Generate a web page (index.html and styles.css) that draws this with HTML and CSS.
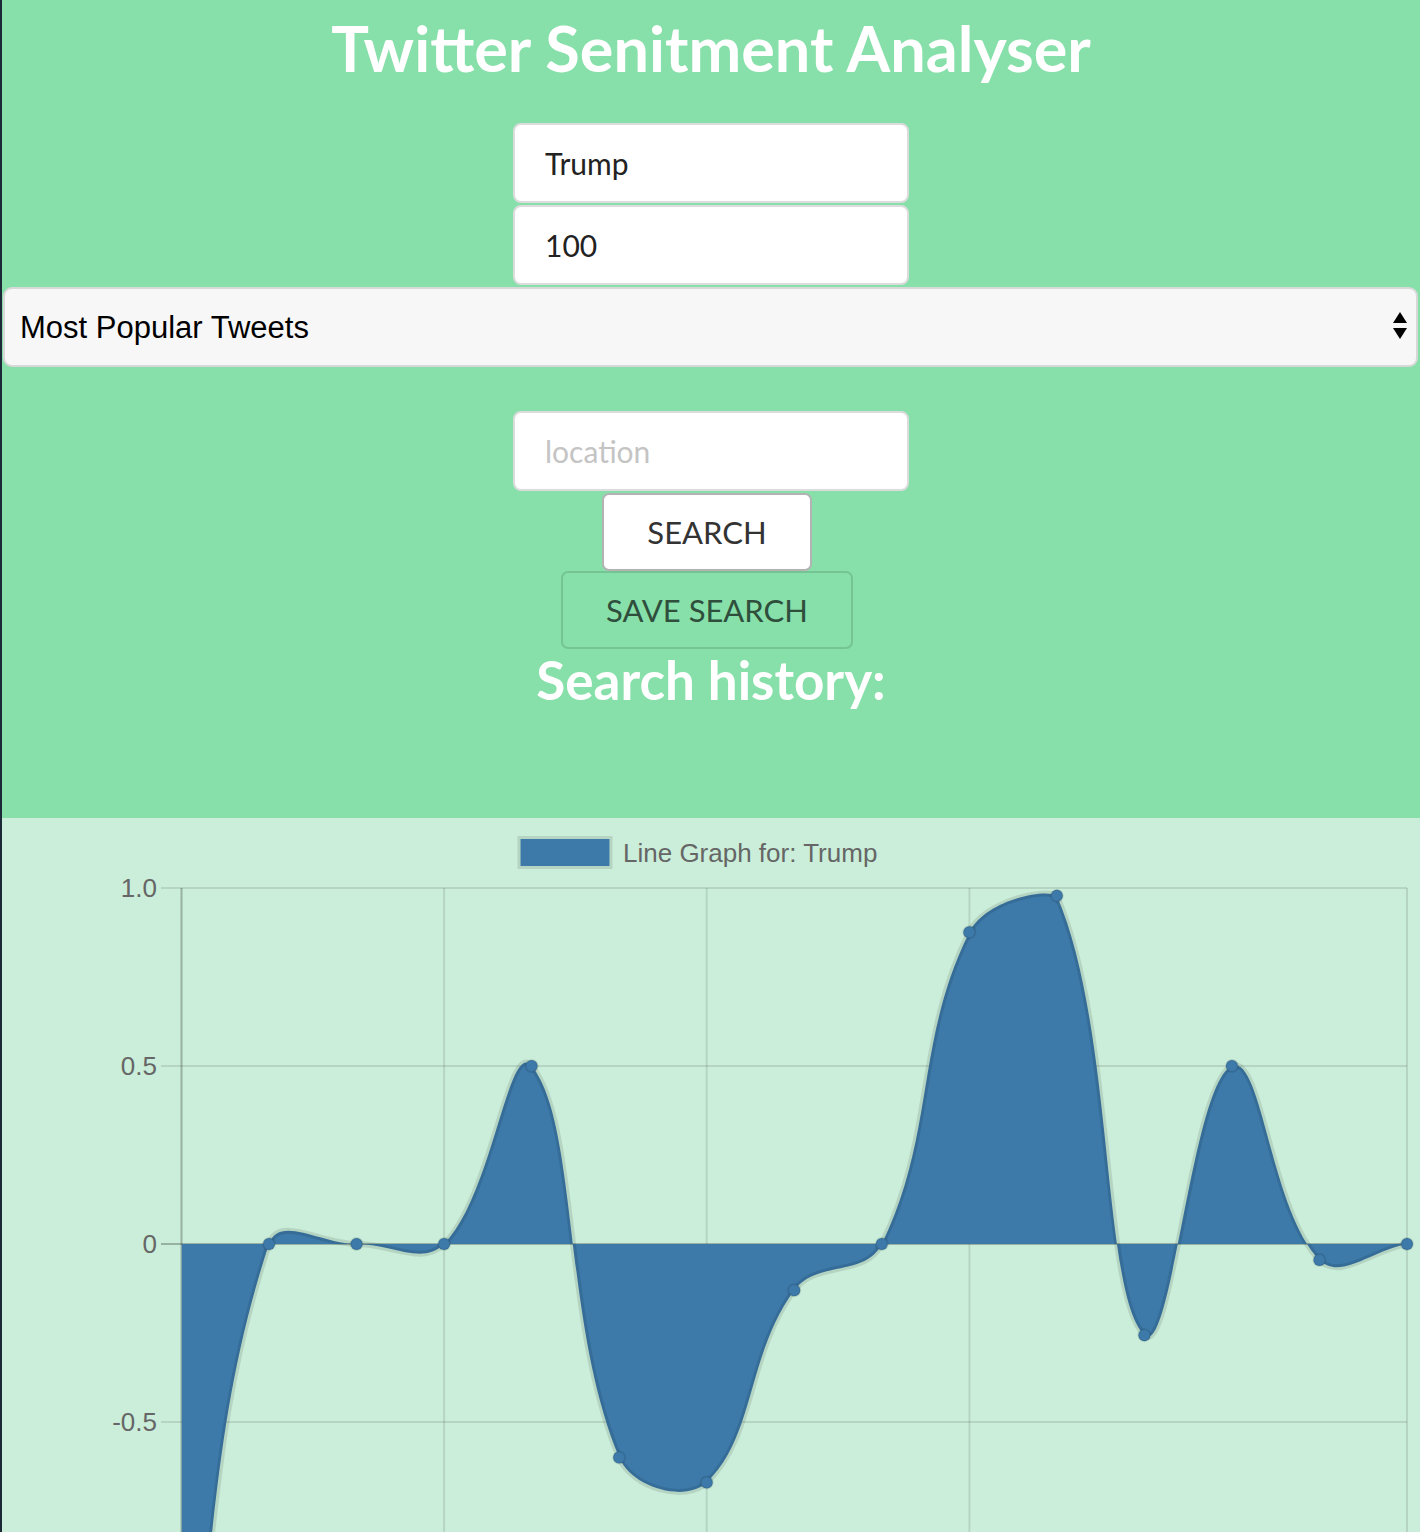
FILE: index.html
```html
<!DOCTYPE html>
<html lang="en">
<head>
<meta charset="utf-8">
<title>Twitter Sentiment Analyser</title>
<link rel="stylesheet" href="styles.css">
</head>
<body>
<div class="page">
  <header class="hero">
    <h1 class="title">Twitter Senitment Analyser</h1>
    <form class="search-form">
      <input class="field" type="text" value="Trump">
      <input class="field" type="text" value="100">
      <div class="select-wrap">
        <select class="select">
          <option>Most Popular Tweets</option>
          <option>Most Recent Tweets</option>
        </select>
        <svg class="select-arrows" width="14" height="27" viewBox="0 0 14 27" aria-hidden="true">
          <polygon points="7,0 14,11 0,11" fill="#000"/>
          <polygon points="0,16 14,16 7,27" fill="#000"/>
        </svg>
      </div>
      <input class="field field-location" type="text" placeholder="location">
      <div class="actions">
        <button type="button" class="btn btn-search">SEARCH</button>
        <button type="button" class="btn btn-save">SAVE SEARCH</button>
      </div>
    </form>
    <h2 class="history-title">Search history:</h2>
  </header>
  <section class="chart-panel">
    <svg class="chart" width="1418" height="714" viewBox="2 818 1418 714">
      <defs>
        <clipPath id="plot-clip">
          <rect x="181.5" y="880" width="1225.5" height="700"/>
        </clipPath>
      </defs>
      <g class="legend">
        <rect x="520.5" y="839" width="89" height="27" fill="#3d7aaa"/>
        <rect x="519" y="837.5" width="92" height="30" fill="none" stroke="rgba(0,0,0,0.1)" stroke-width="3"/>
        <text class="legend-label" x="623" y="855">Line Graph for: Trump</text>
      </g>
      <g class="grid" stroke="rgba(0,0,0,0.1)" stroke-width="2">
        <line x1="161" y1="888" x2="1407" y2="888"/>
        <line x1="161" y1="1066" x2="1407" y2="1066"/>
        <line x1="161" y1="1422" x2="1407" y2="1422"/>
        <line x1="444.1" y1="888" x2="444.1" y2="1540"/>
        <line x1="706.7" y1="888" x2="706.7" y2="1540"/>
        <line x1="969.4" y1="888" x2="969.4" y2="1540"/>
        <line x1="1407" y1="888" x2="1407" y2="1540"/>
      </g>
      <g class="zero-lines" stroke="rgba(0,0,0,0.25)" stroke-width="2">
        <line x1="161" y1="1244" x2="1407" y2="1244"/>
        <line x1="181.5" y1="888" x2="181.5" y2="1540"/>
      </g>
      <g class="ticks">
        <text x="157" y="890">1.0</text>
        <text x="157" y="1068">0.5</text>
        <text x="157" y="1246">0</text>
        <text x="157" y="1424">-0.5</text>
      </g>
      <g clip-path="url(#plot-clip)">
        <path id="area" fill="#3d7aaa" d=""/>
        <path id="line" fill="none" stroke="rgba(0,0,0,0.1)" stroke-width="6" d=""/>
      </g>
      <g id="points"></g>
    </svg>
  </section>
</div>
<script src="script.js"></script>
</body>
</html>
```

FILE: styles.css
```css
* {
  box-sizing: border-box;
}

html,
body {
  margin: 0;
  padding: 0;
}

body {
  background: #87e0a9;
  font-family: Lato, "Open Sans", sans-serif;
}

.page {
  width: 1420px;
  height: 1532px;
  overflow: hidden;
  border-left: 2px solid #1c2a37;
}

.hero {
  display: flex;
  flex-direction: column;
  align-items: center;
  height: 818px;
  background: #87e0a9;
  padding: 12px 0 0;
}

.title {
  margin: 0;
  font: 700 63px/72px Lato, sans-serif;
  color: #ffffff;
}

.search-form {
  align-self: stretch;
  margin-top: 39px;
  display: flex;
  flex-direction: column;
  align-items: center;
  gap: 2px;
}

.field {
  width: 396px;
  height: 80px;
  border: 2px solid #dcdcdc;
  border-radius: 8px;
  background: #ffffff;
  padding: 0 30px;
  font: 400 30px Lato, sans-serif;
  color: #222222;
  outline: none;
}

.field::placeholder {
  color: #c4c4c4;
}

.field-location {
  margin-top: 42px;
}

.select-wrap {
  position: relative;
  align-self: stretch;
  margin: 0 2px 0 1px;
}

.select {
  display: block;
  width: 100%;
  height: 80px;
  -webkit-appearance: none;
  appearance: none;
  background: #f7f7f7;
  border: 2px solid #d8d8d8;
  border-radius: 9px;
  padding: 0 15px;
  font: 400 31px "Liberation Sans", Arial, sans-serif;
  color: #000000;
  outline: none;
}

.select-arrows {
  position: absolute;
  right: 11px;
  top: 25px;
  pointer-events: none;
}

.actions {
  display: flex;
  flex-direction: column;
  align-items: center;
  margin-right: 8px;
}

.btn {
  height: 78px;
  border-radius: 7px;
  padding: 0 43px;
  font: 400 31px Lato, sans-serif;
  cursor: pointer;
}

.btn-search {
  background: #ffffff;
  border: 2px solid #b3b3b3;
  color: #333333;
}

.btn-save {
  background: transparent;
  border: 2px solid #74c593;
  color: #2f4f3c;
}

.history-title {
  margin: 1px 0 0;
  font: 700 53px/60px Lato, sans-serif;
  color: #ffffff;
}

.chart-panel {
  height: 714px;
  background: #caeed9;
}

.chart {
  display: block;
}

.chart text {
  font-family: "Liberation Sans", Arial, sans-serif;
  font-size: 26px;
  fill: #666666;
}

.ticks text {
  text-anchor: end;
  dominant-baseline: middle;
}

.legend-label {
  dominant-baseline: middle;
}
```

FILE: script.js
```js
(function () {
  var data = [-1.5, 0, 0, 0, 0.5, -0.6, -0.67, -0.13, 0, 0.876, 0.978, -0.256, 0.5, -0.045, 0];
  var left = 181.5, right = 1407, zeroY = 1244, unit = 356;
  var top = 888, bottom = zeroY + 1.5 * unit;
  var step = (right - left) / (data.length - 1);
  var tension = 0.4;

  function cap(v, min, max) { return Math.max(Math.min(v, max), min); }

  var pts = data.map(function (v, i) {
    return { x: left + i * step, y: zeroY - v * unit };
  });

  pts.forEach(function (p, i) {
    var prev = pts[i - 1] || p;
    var next = pts[i + 1] || p;
    var d01 = Math.sqrt(Math.pow(p.x - prev.x, 2) + Math.pow(p.y - prev.y, 2));
    var d12 = Math.sqrt(Math.pow(next.x - p.x, 2) + Math.pow(next.y - p.y, 2));
    var s01 = d01 / (d01 + d12);
    var s12 = d12 / (d01 + d12);
    if (isNaN(s01)) { s01 = 0; }
    if (isNaN(s12)) { s12 = 0; }
    var fa = tension * s01, fb = tension * s12;
    p.px = cap(p.x - fa * (next.x - prev.x), left, right);
    p.py = cap(p.y - fa * (next.y - prev.y), top, bottom);
    p.nx = cap(p.x + fb * (next.x - prev.x), left, right);
    p.ny = cap(p.y + fb * (next.y - prev.y), top, bottom);
  });

  function f(n) { return n.toFixed(2); }

  var d = 'M' + f(pts[0].x) + ' ' + f(pts[0].y);
  for (var i = 1; i < pts.length; i++) {
    var a = pts[i - 1], b = pts[i];
    d += ' C' + f(a.nx) + ' ' + f(a.ny) + ' ' + f(b.px) + ' ' + f(b.py) + ' ' + f(b.x) + ' ' + f(b.y);
  }

  var last = pts[pts.length - 1];
  document.getElementById('area').setAttribute('d', d + ' L' + f(last.x) + ' ' + zeroY + ' L' + f(pts[0].x) + ' ' + zeroY + ' Z');
  document.getElementById('line').setAttribute('d', d);

  var ns = 'http://www.w3.org/2000/svg';
  var group = document.getElementById('points');
  pts.forEach(function (p) {
    var c = document.createElementNS(ns, 'circle');
    c.setAttribute('cx', f(p.x));
    c.setAttribute('cy', f(p.y));
    c.setAttribute('r', '6');
    c.setAttribute('fill', '#3d7aaa');
    c.setAttribute('stroke', 'rgba(0,0,0,0.1)');
    c.setAttribute('stroke-width', '2');
    group.appendChild(c);
  });
})();
```
